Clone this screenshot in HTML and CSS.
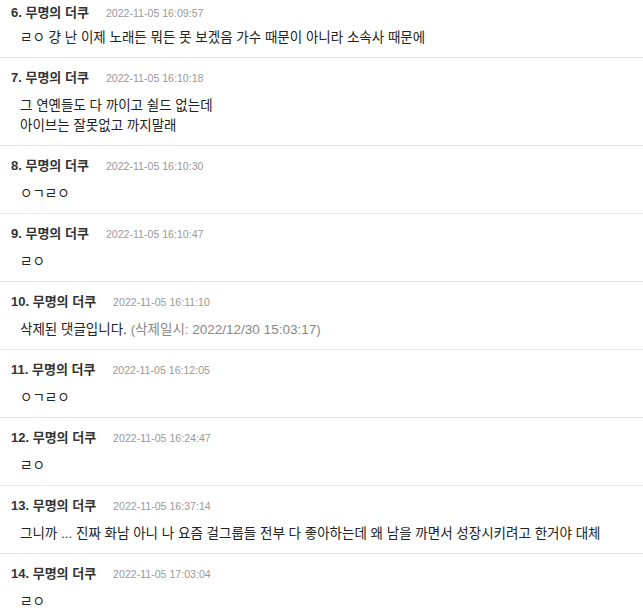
FILE: index.html
```html
<!DOCTYPE html>
<html lang="ko">
<head>
<meta charset="utf-8">
<link rel="stylesheet" href="styles.css">
</head>
<body>
<ul class="comments">
  <li class="comment first">
    <div class="head"><span class="name">6. 무명의 더쿠</span><span class="date">2022-11-05 16:09:57</span></div>
    <div class="body">ㄹㅇ 걍 난 이제 노래든 뭐든 못 보겠음 가수 때문이 아니라 소속사 때문에</div>
  </li>
  <li class="comment">
    <div class="head"><span class="name">7. 무명의 더쿠</span><span class="date">2022-11-05 16:10:18</span></div>
    <div class="body">그 연옌들도 다 까이고 쉴드 없는데<br>아이브는 잘못없고 까지말래</div>
  </li>
  <li class="comment">
    <div class="head"><span class="name">8. 무명의 더쿠</span><span class="date">2022-11-05 16:10:30</span></div>
    <div class="body">ㅇㄱㄹㅇ</div>
  </li>
  <li class="comment">
    <div class="head"><span class="name">9. 무명의 더쿠</span><span class="date">2022-11-05 16:10:47</span></div>
    <div class="body">ㄹㅇ</div>
  </li>
  <li class="comment">
    <div class="head"><span class="name">10. 무명의 더쿠</span><span class="date">2022-11-05 16:11:10</span></div>
    <div class="body">삭제된 댓글입니다. <span class="deleted">(삭제일시: 2022/12/30 15:03:17)</span></div>
  </li>
  <li class="comment">
    <div class="head"><span class="name">11. 무명의 더쿠</span><span class="date">2022-11-05 16:12:05</span></div>
    <div class="body">ㅇㄱㄹㅇ</div>
  </li>
  <li class="comment">
    <div class="head"><span class="name">12. 무명의 더쿠</span><span class="date">2022-11-05 16:24:47</span></div>
    <div class="body">ㄹㅇ</div>
  </li>
  <li class="comment">
    <div class="head"><span class="name">13. 무명의 더쿠</span><span class="date">2022-11-05 16:37:14</span></div>
    <div class="body">그니까 ... 진짜 화남 아니 나 요즘 걸그룹들 전부 다 좋아하는데 왜 남을 까면서 성장시키려고 한거야 대체</div>
  </li>
  <li class="comment">
    <div class="head"><span class="name">14. 무명의 더쿠</span><span class="date">2022-11-05 17:03:04</span></div>
    <div class="body">ㄹㅇ</div>
  </li>
</ul>
</body>
</html>
```
FILE: styles.css
```css
html, body {
  margin: 0;
  padding: 0;
  background: #fff;
}
body {
  font-family: "Liberation Sans", "Noto Sans CJK KR", sans-serif;
  color: #333;
  overflow: hidden;
}
.comments {
  list-style: none;
  margin: -9px 0 0 0;
  padding: 0;
}
.comment {
  border-bottom: 1px solid #e8e8e8;
  padding: 12px 10px 9px 11px;
}
.head {
  display: flex;
  align-items: baseline;
  gap: 17px;
  height: 16px;
  line-height: 16px;
}
.first .head {
  margin-top: 2px;
}
.first .body {
  margin-top: 7px;
}
.name {
  font-size: 13px;
  font-weight: bold;
  color: #333;
}
.date {
  font-size: 10.6px;
  color: #999;
}
.body {
  margin-top: 10px;
  padding-left: 9px;
  font-size: 13.5px;
  line-height: 20px;
  color: #222;
}
.deleted {
  color: #888;
}
```
